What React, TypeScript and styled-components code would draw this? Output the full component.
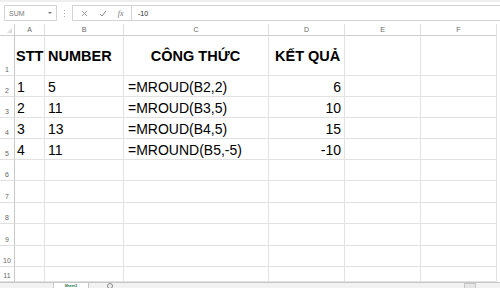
import styled, { createGlobalStyle } from "styled-components";

const GlobalStyle = createGlobalStyle`
  html, body {
    margin: 0;
    padding: 0;
    width: 500px;
    height: 288px;
    overflow: hidden;
    background: #ffffff;
    font-family: "Liberation Sans", Arial, sans-serif;
  }
`;

const Wrapper = styled.div`
  width: 500px;
  height: 288px;
  display: flex;
  flex-direction: column;
  overflow: hidden;
`;

const FormulaBar = styled.div`
  height: 24px;
  flex-shrink: 0;
  box-sizing: border-box;
  border-top: 2px solid #eeeeee;
  display: flex;
  align-items: center;
  padding: 0 0 0 4px;
`;

const NameBox = styled.div`
  width: 53px;
  height: 16px;
  box-sizing: border-box;
  border: 1px solid #d4d4d4;
  display: flex;
  align-items: center;
  justify-content: space-between;
  padding: 0 4px 0 4px;
  font-size: 7px;
  color: #777;
`;

const Caret = styled.span`
  width: 0;
  height: 0;
  border-left: 2px solid transparent;
  border-right: 2px solid transparent;
  border-top: 2px solid #777;
`;

const Dots = styled.div`
  width: 15px;
  display: flex;
  flex-direction: column;
  align-items: center;
  gap: 2px;
  span {
    width: 1px;
    height: 1px;
    background: #aaa;
  }
`;

const ButtonGroup = styled.div`
  width: 59px;
  height: 16px;
  box-sizing: border-box;
  border: 1px solid #d4d4d4;
  border-right: none;
  display: flex;
  align-items: center;
  justify-content: space-around;
  padding: 0 2px;
  color: #888;
`;

const Fx = styled.span`
  font-family: "Liberation Serif", serif;
  font-style: italic;
  font-size: 8px;
  color: #777;
`;

const Input = styled.div`
  flex: 1;
  height: 16px;
  box-sizing: border-box;
  border: 1px solid #d4d4d4;
  border-right: none;
  display: flex;
  align-items: center;
  padding-left: 6px;
  font-size: 7px;
  color: #222;
`;

const Sheet = styled.div`
  flex: 1;
  display: grid;
  grid-template-columns: 15px 30px 79px 145px 76px 76px 76px 1fr;
  grid-template-rows: 12px 40px repeat(4, 21px) repeat(5, 21.4px) 1fr;
  overflow: hidden;
`;

const Corner = styled.div`
  border-right: 1px solid #cfcfcf;
  border-bottom: 1px solid #cfcfcf;
  position: relative;
  &::after {
    content: "";
    position: absolute;
    right: 2px;
    bottom: 2px;
    border-left: 5px solid transparent;
    border-bottom: 5px solid #dcdcdc;
  }
`;

const ColHead = styled.div`
  border-right: 1px solid #e0e0e0;
  border-bottom: 1px solid #cfcfcf;
  display: flex;
  align-items: center;
  justify-content: center;
  font-size: 7px;
  color: #666;
`;

const RowHead = styled.div`
  border-right: 1px solid #c8c8c8;
  border-bottom: 1px solid #e0e0e0;
  display: flex;
  align-items: flex-end;
  justify-content: center;
  padding-bottom: 2px;
  box-sizing: border-box;
  font-size: 7px;
  color: #666;
`;

const Cell = styled.div<{
  $align?: "left" | "center" | "right";
  $bold?: boolean;
  $indent?: number;
}>`
  border-right: 1px solid #e2e2e2;
  border-bottom: 1px solid #e2e2e2;
  box-sizing: border-box;
  display: flex;
  align-items: center;
  justify-content: ${(p) =>
    p.$align === "right" ? "flex-end" : p.$align === "center" ? "center" : "flex-start"};
  padding: ${(p) => (p.$bold ? "2px 2px 2px 1px" : "1px 3px 0 2px")};
  padding-left: ${(p) => (p.$indent ? `${p.$indent}px` : undefined)};
  font-size: ${(p) => (p.$bold ? "14.5px" : "14px")};
  font-weight: ${(p) => (p.$bold ? 700 : 400)};
  color: #000;
  white-space: nowrap;
`;

const TabBar = styled.div`
  height: 6px;
  flex-shrink: 0;
  box-sizing: border-box;
  border-top: 1px solid #c6c6c6;
  background: #f2f2f2;
  display: flex;
  align-items: flex-start;
  overflow: hidden;
`;

const Tab = styled.div`
  margin-left: 53px;
  width: 34px;
  height: 5px;
  background: #fff;
  border-left: 1px solid #c6c6c6;
  border-right: 1px solid #c6c6c6;
  font-size: 4px;
  font-weight: 700;
  color: #217346;
  text-align: center;
  line-height: 5px;
`;

const AddSheet = styled.div`
  margin-left: 18px;
  width: 6px;
  height: 6px;
  border: 1px solid #888;
  border-radius: 50%;
  box-sizing: border-box;
`;

const Scroll = styled.div`
  margin-left: auto;
  margin-right: 24px;
  width: 10px;
  height: 5px;
  border: 1px solid #c6c6c6;
  background: #e6e6e6;
`;

const columns = ["A", "B", "C", "D", "E", "F"];

type Row = { stt: string; num: string; formula: string; result: string };

const rows: Row[] = [
  { stt: "1", num: "5", formula: "=MROUD(B2,2)", result: "6" },
  { stt: "2", num: "11", formula: "=MROUD(B3,5)", result: "10" },
  { stt: "3", num: "13", formula: "=MROUD(B4,5)", result: "15" },
  { stt: "4", num: "11", formula: "=MROUND(B5,-5)", result: "-10" },
];

const App = () => {
  return (
    <Wrapper>
      <GlobalStyle />
      <FormulaBar>
        <NameBox>
          SUM
          <Caret />
        </NameBox>
        <Dots>
          <span />
          <span />
          <span />
        </Dots>
        <ButtonGroup>
          <svg width="7" height="7" viewBox="0 0 7 7">
            <path d="M1 1 L6 6 M6 1 L1 6" stroke="#888" strokeWidth="0.8" />
          </svg>
          <svg width="8" height="7" viewBox="0 0 8 7">
            <path d="M1 4 L3 6 L7 1" stroke="#888" strokeWidth="1" fill="none" />
          </svg>
          <Fx>fx</Fx>
        </ButtonGroup>
        <Input>-10</Input>
      </FormulaBar>
      <Sheet>
        <Corner />
        {columns.map((c) => (
          <ColHead key={c}>{c}</ColHead>
        ))}
        <div />

        <RowHead>1</RowHead>
        <Cell $bold>STT</Cell>
        <Cell $bold $indent={3}>NUMBER</Cell>
        <Cell $bold $align="center">CÔNG THỨC</Cell>
        <Cell $bold $indent={6}>KẾT QUẢ</Cell>
        <Cell />
        <Cell />
        <div />

        {rows.map((r, i) => (
          <>
            <RowHead key={"h" + i}>{i + 2}</RowHead>
            <Cell>{r.stt}</Cell>
            <Cell $indent={3}>{r.num}</Cell>
            <Cell $indent={4}>{r.formula}</Cell>
            <Cell $align="right">{r.result}</Cell>
            <Cell />
            <Cell />
            <div />
          </>
        ))}

        {[6, 7, 8, 9, 10, 11].map((n) => (
          <>
            <RowHead key={"e" + n}>{n}</RowHead>
            <Cell />
            <Cell />
            <Cell />
            <Cell />
            <Cell />
            <Cell />
            <div />
          </>
        ))}
      </Sheet>
      <TabBar>
        <Tab>Sheet1</Tab>
        <AddSheet />
        <Scroll />
      </TabBar>
    </Wrapper>
  );
};

export default App;
